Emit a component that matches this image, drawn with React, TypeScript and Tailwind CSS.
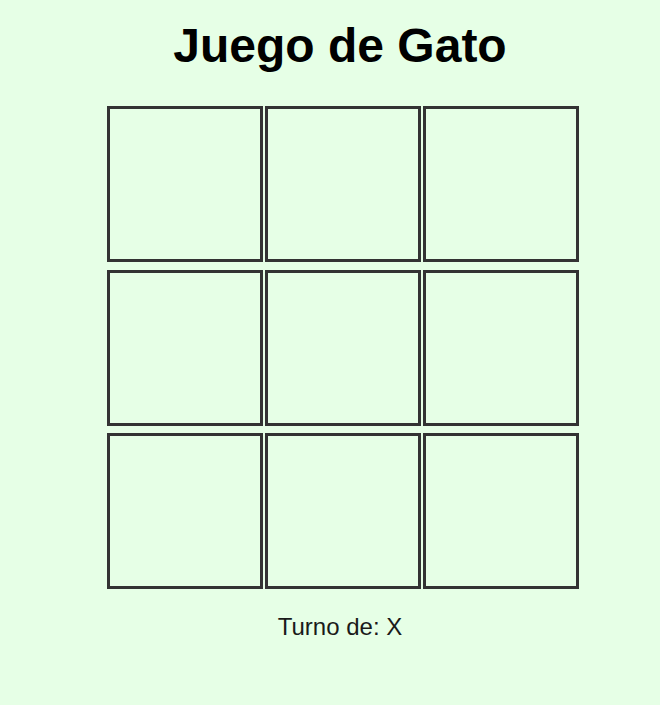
const cells = Array.from({ length: 9 }, (_, i) => i);

const Cell = ({ value }: { value: string }) => (
    <button
        type="button"
        className="w-[156px] h-[156px] border-[3px] border-[#333333] bg-transparent text-[48px] font-bold cursor-pointer"
    >
        {value}
    </button>
);

const App = () => {
    return (
        <div
            className="min-h-[705px] w-full bg-[#e6ffe6] pl-5 flex flex-col items-center"
            style={{ fontFamily: '"Liberation Sans", Arial, sans-serif' }}
        >
            <h1 className="mt-[18px] text-[48px] leading-[55px] font-bold text-black">
                Juego de Gato
            </h1>
            <div className="mt-[33px] pl-[6px]">
                <div className="grid grid-cols-[156px_156px_156px] grid-rows-[156px_155px_155px] gap-x-[2px] gap-y-[8px]">
                    {cells.map((c) => (
                        <Cell key={c} value="" />
                    ))}
                </div>
            </div>
            <p className="mt-[25px] text-[24px] leading-[28px] text-[#1a1a1a]">
                Turno de: X
            </p>
        </div>
    );
};

export default App;
